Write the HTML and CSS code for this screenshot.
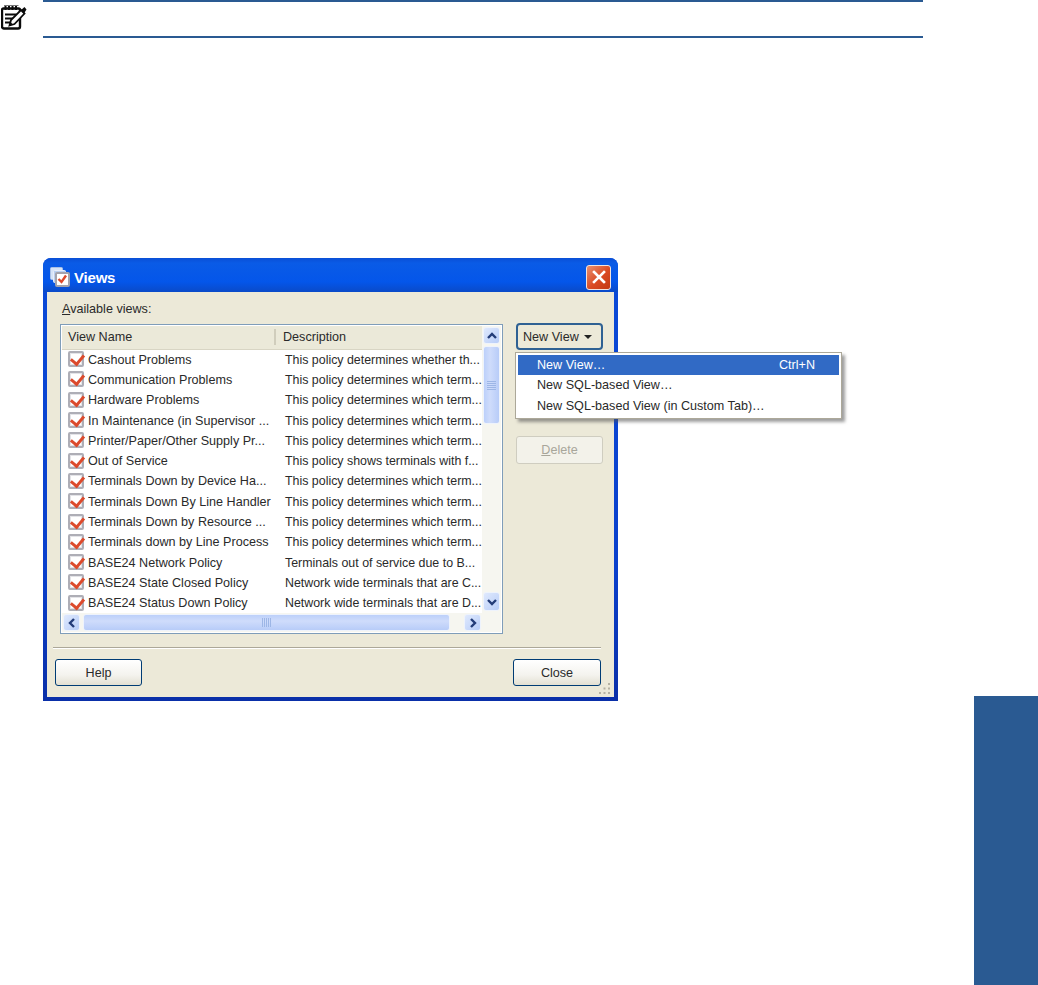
FILE: index.html
```html
<!DOCTYPE html>
<html lang="en">
<head>
<meta charset="utf-8">
<title>Views</title>
<link rel="stylesheet" href="styles.css">
</head>
<body>
<div class="note">
  <svg class="note-icon" viewBox="0 0 26 28" width="26" height="28">
    <path d="M2.500 6.500h15a1.500 1.500 0 0 1 1.500 1.500v16.500a2 2 0 0 1-2 2H3a2 2 0 0 1-2-2V8a1.500 1.500 0 0 1 1.500-1.500z" fill="#fff" stroke="#0c0c0c" stroke-width="2.400"/>
    <path d="M4.500 3v5M8 3v5M11.500 3v5M15 3v5" stroke="#0c0c0c" stroke-width="2" fill="none"/>
    <path d="M3.500 3.500h14" stroke="#777" stroke-width="1" fill="none"/>
    <path d="M4 12.500h11.500M4 16.500h8M4 20.500h5.500" stroke="#0c0c0c" stroke-width="1.800" fill="none"/>
    <path d="M8.500 23.500l1.500-5.500L20 8l3.500 3.500L13.500 22z" fill="#fff" stroke="#0c0c0c" stroke-width="1.800"/>
    <path d="M20 8l3.500-3 2 2.500-2.500 4z" fill="#0c0c0c"/>
    <path d="M8.500 23.500l1-3.500 2.500 2.500z" fill="#0c0c0c"/>
  </svg>
  <div class="note-rule"></div>
</div>

<section class="dialog">
  <header class="titlebar">
    <svg class="title-icon" viewBox="0 0 20 20" width="20" height="20">
      <rect x="0.500" y="0.500" width="12" height="12" rx="1" fill="#d5e3f8" stroke="#a9c0e6"/>
      <rect x="3.500" y="3.500" width="12" height="12" rx="1" fill="#b9cff0" stroke="#e8eefa"/>
      <rect x="6" y="6" width="13" height="13" rx="1" fill="#fff" stroke="#a3a3ad" stroke-width="2"/>
      <path d="M8.500 12l3 3 4.500-6.500" fill="none" stroke="#dc4a2c" stroke-width="2.400"/>
    </svg>
    <span class="title-text">Views</span>
    <button class="close-x" aria-label="Close">
      <svg viewBox="0 0 14 14" width="14" height="14"><path d="M2 2l10 10M12 2L2 12" stroke="#fff" stroke-width="2.600" stroke-linecap="square"/></svg>
    </button>
  </header>
  <div class="client">
    <div class="avail"><span class="ul">A</span>vailable views:</div>
    <div class="main">
      <div class="listbox">
        <div class="list-area">
          <div class="list-head">
            <span class="head-name">View Name</span>
            <span class="head-desc">Description</span>
          </div>
          <ul class="rows" id="rows">
            <li class="row"><span class="chk"></span><span class="name">Cashout Problems</span><span class="desc">This policy determines whether th...</span></li>
            <li class="row"><span class="chk"></span><span class="name">Communication Problems</span><span class="desc">This policy determines which term...</span></li>
            <li class="row"><span class="chk"></span><span class="name">Hardware Problems</span><span class="desc">This policy determines which term...</span></li>
            <li class="row"><span class="chk"></span><span class="name">In Maintenance (in Supervisor ...</span><span class="desc">This policy determines which term...</span></li>
            <li class="row"><span class="chk"></span><span class="name">Printer/Paper/Other Supply Pr...</span><span class="desc">This policy determines which term...</span></li>
            <li class="row"><span class="chk"></span><span class="name">Out of Service</span><span class="desc">This policy shows terminals with f...</span></li>
            <li class="row"><span class="chk"></span><span class="name">Terminals Down by Device Ha...</span><span class="desc">This policy determines which term...</span></li>
            <li class="row"><span class="chk"></span><span class="name">Terminals Down By Line Handler</span><span class="desc">This policy determines which term...</span></li>
            <li class="row"><span class="chk"></span><span class="name">Terminals Down by Resource ...</span><span class="desc">This policy determines which term...</span></li>
            <li class="row"><span class="chk"></span><span class="name">Terminals down by Line Process</span><span class="desc">This policy determines which term...</span></li>
            <li class="row"><span class="chk"></span><span class="name">BASE24 Network Policy</span><span class="desc">Terminals out of service due to B...</span></li>
            <li class="row"><span class="chk"></span><span class="name">BASE24 State Closed Policy</span><span class="desc">Network wide terminals that are C...</span></li>
            <li class="row"><span class="chk"></span><span class="name">BASE24 Status Down Policy</span><span class="desc">Network wide terminals that are D...</span></li>
          </ul>
        </div>
        <div class="vscroll">
          <span class="sb-btn"><svg viewBox="0 0 12 12" width="12" height="12"><path d="M2 8l4-4 4 4" fill="none" stroke="#233c78" stroke-width="2.400"/></svg></span>
          <span class="v-thumb"><span class="grip-h"></span></span>
          <span class="v-track"></span>
          <span class="sb-btn sb-tall"><svg viewBox="0 0 12 12" width="12" height="12"><path d="M2 4l4 4 4-4" fill="none" stroke="#233c78" stroke-width="2.400"/></svg></span>
        </div>
        <div class="hscroll">
          <span class="sb-btn"><svg viewBox="0 0 12 12" width="12" height="12"><path d="M8 2L4 6l4 4" fill="none" stroke="#233c78" stroke-width="2.400"/></svg></span>
          <span class="h-thumb"><span class="grip-v"></span></span>
          <span class="sb-btn"><svg viewBox="0 0 12 12" width="12" height="12"><path d="M4 2l4 4-4 4" fill="none" stroke="#233c78" stroke-width="2.400"/></svg></span>
        </div>
      </div>
      <div class="side">
        <button class="btn btn-new">New View <i class="caret"></i></button>
        <button class="btn btn-delete"><span class="ul">D</span>elete</button>
        <div class="menu">
          <div class="item active"><span>New View…</span><span>Ctrl+N</span></div>
          <div class="item"><span>New SQL-based View…</span></div>
          <div class="item"><span>New SQL-based View (in Custom Tab)…</span></div>
        </div>
      </div>
    </div>
    <div class="sep"></div>
    <div class="foot">
      <button class="btn btn-help">Help</button>
      <button class="btn btn-close">Close</button>
    </div>
    <svg class="gripper" viewBox="0 0 14 14" width="14" height="14">
      <path d="M10 1h2v2h-2zM5.500 5.500h2v2h-2zM10 5.500h2v2h-2zM1 10h2v2H1zM5.500 10h2v2h-2zM10 10h2v2h-2z" fill="#b5b2a3"/>
    </svg>
  </div>
</section>

<div class="side-tab"></div>
</body>
</html>
```
FILE: styles.css
```css
* { box-sizing: border-box; }
html, body { margin: 0; padding: 0; }
body {
  width: 1038px;
  height: 985px;
  position: relative;
  overflow: hidden;
  background: #fff;
  font-family: "Liberation Sans", Arial, sans-serif;
  font-size: 12.6px;
  color: #2a2a2a;
}
.note { position: relative; height: 258px; padding-left: 43px; }
.note-icon { position: absolute; left: 1px; top: 2px; }
.note-rule {
  width: 880px;
  height: 38px;
  border-top: 2px solid #2a5a92;
  border-bottom: 2px solid #2a5a92;
}
.dialog {
  margin-left: 43px;
  width: 575px;
  height: 443px;
  display: flex;
  flex-direction: column;
  background: linear-gradient(#0a4ad8, #0a40cc 70%, #0a2fa8);
  border-radius: 8px 8px 0 0;
}
.titlebar {
  height: 34px;
  flex: none;
  display: flex;
  align-items: center;
  padding: 4px 7px 0 7px;
  border-radius: 8px 8px 0 0;
  background: linear-gradient(#0a4fd6 0, #0a5be6 15%, #0456ea 70%, #0a4ac8 100%);
}
.title-icon { flex: none; margin-right: 4px; }
.title-text { color: #fff; font-weight: bold; font-size: 15px; letter-spacing: -.2px; flex: 1; }
.close-x {
  width: 25px;
  height: 25px;
  padding: 0;
  border: 1px solid #f4e4dc;
  border-radius: 3px;
  background: linear-gradient(135deg, #e9906f, #da4a22 55%, #c23a14);
  display: flex;
  align-items: center;
  justify-content: center;
}
.client {
  position: relative;
  flex: 1;
  margin: 0 4px 4px;
  background: #ece9d8;
  padding: 8px 13px 0 6px;
}
.ul { text-decoration: underline; }
.avail { margin-left: 9px; height: 24px; padding-top: 2px; }
.main { position: relative; display: flex; margin-left: 7px; gap: 13px; height: 310px; }
.listbox {
  width: 443px;
  height: 310px;
  flex: none;
  border: 1px solid #7f9db9;
  background: #fff;
  padding: 1px;
  display: grid;
  grid-template-columns: 1fr 19px;
  grid-template-rows: 1fr 19px;
}
.list-area { overflow: hidden; min-width: 0; }
.list-head {
  height: 23.500px;
  display: flex;
  align-items: center;
  background: #ebe9d9;
  border-bottom: 1px solid #d8d5c4;
}
.head-name { width: 214px; padding-left: 6px; border-right: 2px solid #d0cdbc; height: 16px; line-height: 17px; }
.head-desc { padding-left: 7px; height: 16px; line-height: 17px; }
.rows { list-style: none; margin: 0; padding: 0; }
.row {
  height: 20.300px;
  display: flex;
  align-items: center;
  white-space: nowrap;
}
.chk {
  width: 16px;
  height: 16px;
  flex: none;
  margin-left: 6px;
  margin-right: 4px;
  margin-top: -1px;
  border: 2px solid #aeaeb6;
  border-radius: 2px;
  background: #fff;
  box-shadow: inset 0 0 0 1px #e4e4e8;
  position: relative;
}
.chk::after {
  content: "";
  position: absolute;
  left: 3px;
  top: -1px;
  width: 6px;
  height: 10px;
  border-right: 3px solid #dc4a2c;
  border-bottom: 3px solid #dc4a2c;
  transform: rotate(40deg);
}
.name { width: 197px; flex: none; overflow: hidden; }
.desc { flex: none; font-size: 12.400px; }
.vscroll {
  display: flex;
  flex-direction: column;
  background: #f6f6f0;
  padding: 1px 1px 2px;
}
.hscroll {
  grid-column: 1 / 3;
  display: flex;
  align-items: stretch;
  background: #f6f6f0;
  padding: 1px 20px 1px 1px;
}
.sb-btn {
  flex: none;
  width: 17px;
  height: 17px;
  display: flex;
  align-items: center;
  justify-content: center;
  border: 1px solid #eef3fc;
  border-radius: 3px;
  background: linear-gradient(135deg, #dfe9fd, #b8cdf8);
}
.sb-tall { height: 19px; }
.v-thumb {
  height: 78px;
  flex: none;
  margin-top: 2px;
  border: 1px solid #eef3fc;
  border-radius: 3px;
  background: linear-gradient(90deg, #bcd0fa, #cfdcfb 40%, #b8ccf8);
  display: flex;
  align-items: center;
  justify-content: center;
}
.v-track { flex: 1; }
.h-thumb {
  flex: 1;
  margin: 0 14px 0 3px;
  border: 1px solid #eef3fc;
  border-radius: 3px;
  background: linear-gradient(#bcd0fa, #cfdcfb 40%, #b8ccf8);
  display: flex;
  align-items: center;
  justify-content: center;
}
.grip-h { width: 9px; height: 9px; background: repeating-linear-gradient(#9db6e6 0 1px, transparent 1px 2px); }
.grip-v { width: 9px; height: 9px; background: repeating-linear-gradient(90deg, #9db6e6 0 1px, transparent 1px 2px); }
.side { position: relative; width: 87px; flex: none; display: flex; flex-direction: column; }
.btn {
  font: inherit;
  color: #2a2a2a;
  padding: 0;
  border: 1px solid #003c74;
  border-radius: 3px;
  background: linear-gradient(#fff, #f4f3ee 60%, #e3e0d2);
}
.btn-new {
  width: 87px;
  height: 27px;
  margin-top: -1px;
  background: #ece9d8;
  border: 2px solid #2f6193;
  border-radius: 4px;
  display: flex;
  align-items: center;
  padding-left: 5px;
  gap: 5px;
}
.caret {
  display: inline-block;
  border: 4.500px solid transparent;
  border-top: 4px solid #222;
  border-bottom: 0;
}
.btn-delete {
  width: 87px;
  height: 28px;
  margin-top: 86px;
  color: #a8a69a;
  background: #f3f2ea;
  border: 1px solid #cfcdc0;
}
.menu {
  position: absolute;
  left: -1px;
  top: 28px;
  width: 327px;
  height: 67px;
  padding: 2px;
  background: #fff;
  border: 1px solid #aca899;
  box-shadow: 3px 3px 3px rgba(80, 80, 80, .55);
}
.item {
  height: 20.300px;
  display: flex;
  justify-content: space-between;
  align-items: center;
  padding: 0 24px 0 19px;
  white-space: nowrap;
}
.item.active { background: #316ac5; color: #fff; }
.sep { height: 2px; margin-top: 13px; border-top: 1px solid #aca899; border-bottom: 1px solid #fff; }
.foot { display: flex; justify-content: space-between; margin: 10px 0 0 2px; }
.btn-help { width: 87px; height: 27px; }
.btn-close { width: 88px; height: 27px; }
.gripper { position: absolute; right: 2px; bottom: 1px; }
.side-tab {
  position: absolute;
  left: 974px;
  top: 696px;
  width: 64px;
  height: 289px;
  background: #2a5a92;
}
```
